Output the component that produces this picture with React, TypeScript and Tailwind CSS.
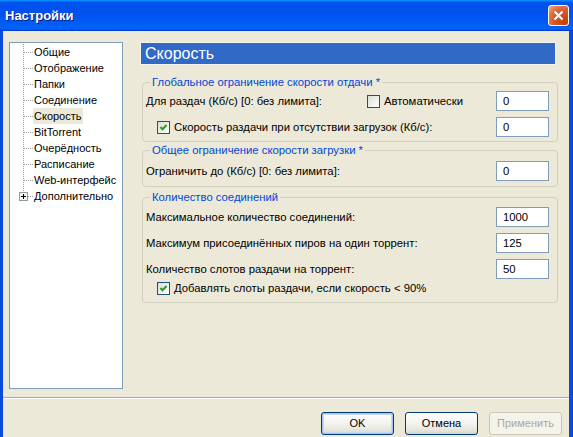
import React from "react";

function Checkbox({ checked }: { checked?: boolean }) {
  return (
    <span className="w-[13px] h-[13px] shrink-0 border border-[#1c5180] bg-[linear-gradient(135deg,#dcdcd7,#ffffff)] flex items-center justify-center">
      {checked && (
        <svg width="9" height="9" viewBox="0 0 9 9">
          <path d="M1.5 4 L3.5 6.3 L7.6 2" stroke="#21a121" strokeWidth="2" fill="none" />
        </svg>
      )}
    </span>
  );
}

function Field({ value }: { value: string }) {
  return (
    <div className="w-[53px] h-[20px] shrink-0 border border-[#7f9db9] bg-white flex items-center pl-[6px] text-black ml-auto">
      {value}
    </div>
  );
}

function Group({
  title,
  className,
  children,
}: {
  title: string;
  className: string;
  children: React.ReactNode;
}) {
  return (
    <div className={"relative border border-[#d0d0bf] rounded-[4px] " + className}>
      <span className="absolute -top-[8px] left-[7px] px-[2px] bg-[#ece9d8] text-[#0046d5] leading-[14px]">
        {title}
      </span>
      {children}
    </div>
  );
}

function Button({
  label,
  def,
  disabled,
}: {
  label: string;
  def?: boolean;
  disabled?: boolean;
}) {
  if (disabled) {
    return (
      <div className="w-[73px] h-[23px] rounded-[3px] border border-[#c9c7ba] bg-[#f5f4ea] text-[#aca899] flex items-center justify-center">
        {label}
      </div>
    );
  }
  return (
    <div
      className={
        def
          ? "w-[73px] h-[23px] rounded-[3px] border border-[#003c74] bg-[linear-gradient(180deg,#ffffff,#f0f0ea_60%,#e3e3db_86%,#d6d0c5)] shadow-[inset_0_0_0_1px_#a7c3ee,inset_0_0_0_2px_#c6d8f5] text-black flex items-center justify-center"
          : "w-[73px] h-[23px] rounded-[3px] border border-[#003c74] bg-[linear-gradient(180deg,#ffffff,#f0f0ea_60%,#e3e3db_86%,#d6d0c5)] text-black flex items-center justify-center"
      }
    >
      {label}
    </div>
  );
}

const treeItems = [
  "Общие",
  "Отображение",
  "Папки",
  "Соединение",
  "Скорость",
  "BitTorrent",
  "Очерёдность",
  "Расписание",
  "Web-интерфейс",
  "Дополнительно",
];

function Tree() {
  return (
    <div className="relative w-[114px] h-[347px] shrink-0 border border-[#7f9db9] bg-white pt-[1px]">
      <svg
        className="absolute left-0 top-0"
        width="30"
        height="170"
        viewBox="0 0 30 170"
        shapeRendering="crispEdges"
      >
        <line x1="13.5" y1="1" x2="13.5" y2="149" stroke="#a0a0a0" strokeDasharray="1 1" />
        {treeItems.slice(0, 9).map((_, i) => (
          <line
            key={i}
            x1="14"
            y1={9.5 + 16 * i}
            x2="23"
            y2={9.5 + 16 * i}
            stroke="#a0a0a0"
            strokeDasharray="1 1"
          />
        ))}
        <line x1="18" y1="153.5" x2="23" y2="153.5" stroke="#a0a0a0" strokeDasharray="1 1" />
        <rect x="9.5" y="149.5" width="8" height="8" fill="#f4f4ef" stroke="#919b9c" />
        <line x1="11" y1="153.5" x2="16" y2="153.5" stroke="#000" />
        <line x1="13.5" y1="151" x2="13.5" y2="156" stroke="#000" />
      </svg>
      {treeItems.map((t) => (
        <div key={t} className="h-[16px] flex items-center pl-[23px]">
          <span
            className={
              t === "Скорость"
                ? "h-[16px] flex items-center px-[1px] bg-[#ece9d8] text-black"
                : "h-[16px] flex items-center px-[1px] text-black"
            }
          >
            {t}
          </span>
        </div>
      ))}
    </div>
  );
}

export default function App() {
  return (
    <div className="w-[573px] h-[437px] overflow-hidden flex flex-col font-['Liberation_Sans',Arial,sans-serif] text-[11px] text-black bg-[#ece9d8]">
      {/* Title bar */}
      <div className="h-[31px] shrink-0 flex items-center justify-between pl-[5px] pr-[4px] bg-[linear-gradient(180deg,#0997ff,#0053ee_8%,#0050ee_40%,#0061f5_88%,#0063f8_93%,#005bff_95%,#003dd7_96%,#003dd7)]">
        <span className="text-white font-bold text-[13px] [text-shadow:1px_1px_0_#0a1883]">
          Настройки
        </span>
        <div className="w-[21px] h-[21px] rounded-[3px] border border-white bg-[radial-gradient(circle_at_85%_85%,#c44200_0%,#d9582a_50%,#e07a50_75%,#f2b49a_100%)] flex items-center justify-center">
          <svg width="11" height="11" viewBox="0 0 11 11">
            <path d="M1.5 1.5 L9.5 9.5 M9.5 1.5 L1.5 9.5" stroke="#fff" strokeWidth="2" />
          </svg>
        </div>
      </div>

      {/* Body */}
      <div className="flex-1 flex flex-col border-l-[3px] border-r-[4px] border-[#0a4bdc]">
        <div className="flex items-start pl-[6px] pt-[11px]">
          <Tree />
          <div className="ml-[17px] w-[418px] flex flex-col text-[11.3px]">
            <div className="h-[23px] border border-[#f4f3ee] bg-[#3169c6] text-white text-[16px] flex items-center pl-[4px] w-[416px]">
              Скорость
            </div>

            <Group
              title="Глобальное ограничение скорости отдачи *"
              className="mt-[17px] ml-[2px] w-[416px] pt-[8px] pb-[4px] pl-[3px] pr-[8px]"
            >
              <div className="h-[20px] flex items-center">
                <span className="w-[221px]">Для раздач (Кб/с) [0: без лимита]:</span>
                <Checkbox />
                <span className="ml-[4px]">Автоматически</span>
                <Field value="0" />
              </div>
              <div className="h-[20px] mt-[6px] flex items-center pl-[11px]">
                <Checkbox checked />
                <span className="ml-[4px]">Скорость раздачи при отсутствии загрузок (Кб/с):</span>
                <Field value="0" />
              </div>
            </Group>

            <Group
              title="Общее ограничение скорости загрузки *"
              className="mt-[8px] ml-[2px] w-[416px] pt-[10px] pb-[5px] pl-[3px] pr-[8px]"
            >
              <div className="h-[20px] flex items-center">
                <span>Ограничить до (Кб/с) [0: без лимита]:</span>
                <Field value="0" />
              </div>
            </Group>

            <Group
              title="Количество соединений"
              className="mt-[10px] ml-[2px] w-[416px] pt-[9px] pb-[7px] pl-[3px] pr-[8px]"
            >
              <div className="h-[20px] flex items-center">
                <span>Максимальное количество соединений:</span>
                <Field value="1000" />
              </div>
              <div className="h-[20px] mt-[6px] flex items-center">
                <span>Максимум присоединённых пиров на один торрент:</span>
                <Field value="125" />
              </div>
              <div className="h-[20px] mt-[6px] flex items-center">
                <span>Количество слотов раздачи на торрент:</span>
                <Field value="50" />
              </div>
              <div className="h-[13px] mt-[3px] flex items-center pl-[11px]">
                <Checkbox checked />
                <span className="ml-[4px]">Добавлять слоты раздачи, если скорость &lt; 90%</span>
              </div>
            </Group>
          </div>
        </div>

        <div className="mt-[8px] h-[2px] border-t border-[#aca899] border-b border-b-white" />

        <div className="flex justify-end gap-[11px] pr-[7px] mt-[13px]">
          <Button label="OK" def />
          <Button label="Отмена" />
          <Button label="Применить" disabled />
        </div>
      </div>
    </div>
  );
}
